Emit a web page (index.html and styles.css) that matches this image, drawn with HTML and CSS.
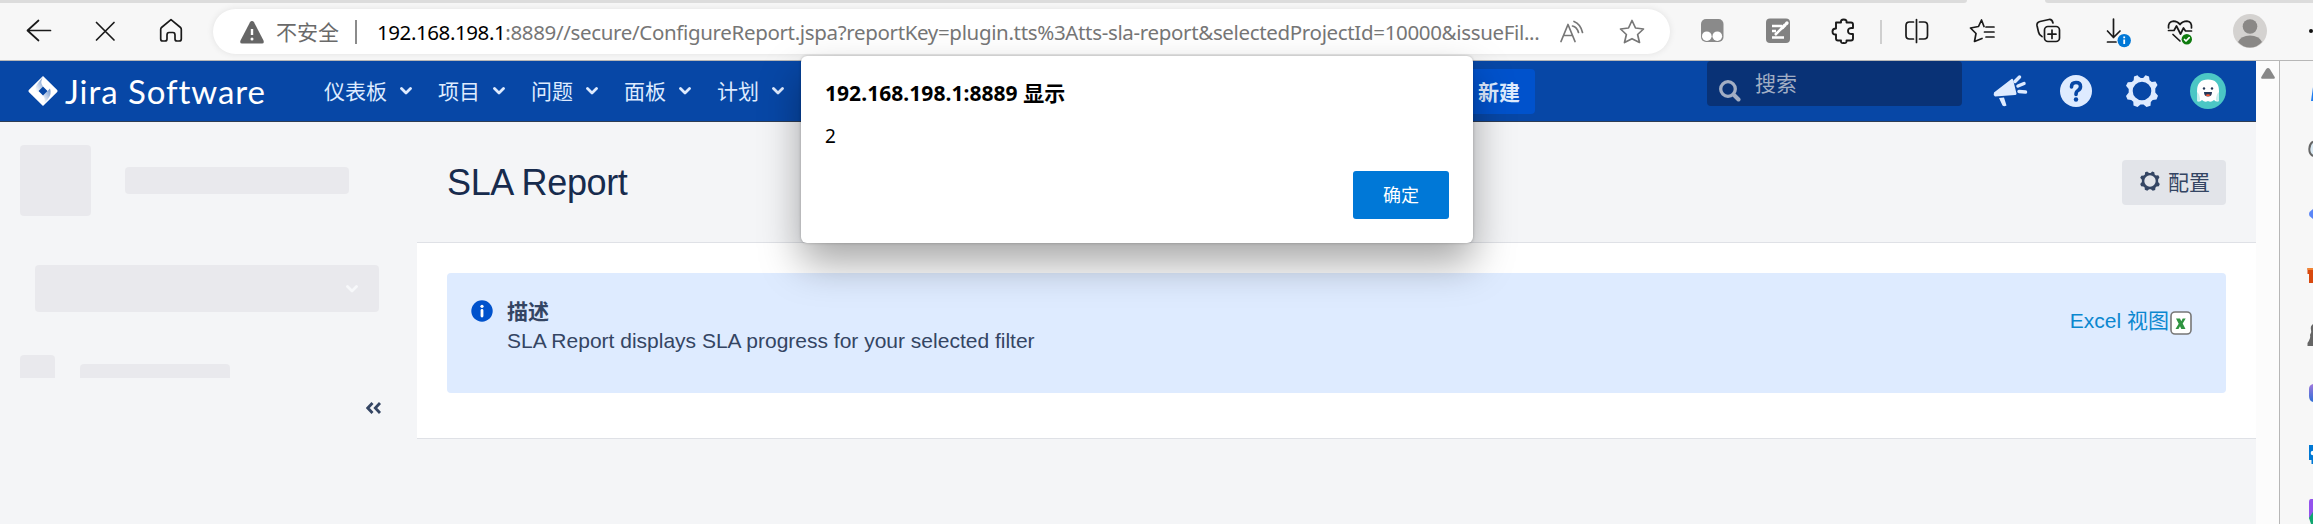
FILE: index.html
```html
<!DOCTYPE html>
<html lang="zh-CN">
<head>
<meta charset="utf-8">
<title>SLA Report</title>
<link rel="stylesheet" href="styles.css">
</head>
<body>
<div class="tabstrip"><span class="tab-left"></span><span class="tab-right"></span></div>
<div class="toolbar">
  <div class="nav-icons">
    <svg class="ic" viewBox="0 0 36 36"><path d="M29.500 17.500H6.500M17.500 7.500L6.500 17.500L17.500 27.500"/></svg>
    <svg class="ic" viewBox="0 0 36 36"><path d="M9.500 9.500L27 27M27 9.500L9.500 27"/></svg>
    <svg class="ic" viewBox="0 0 36 36"><path d="M18 6.700L8.500 14.500Q7.700 15.200 7.700 16.500V26Q7.700 28 9.700 28H12Q14 28 14 26V22Q14 19.500 16 19.500H20Q22 19.500 22 22V26Q22 28 24 28H26.300Q28.300 28 28.300 26V16.500Q28.300 15.200 27.500 14.500Z"/></svg>
  </div>
  <div class="address">
    <svg class="warn" viewBox="0 0 24 24"><path d="M12 1Q13.300 1 14 2.300L23.500 20.500Q24.500 23.500 22 23.500H2Q-.5 23.500 .5 20.500L10 2.300Q10.700 1 12 1Z" fill="#666"/><path d="M12 9V15" stroke="#fff" stroke-width="2.400"/><circle cx="12" cy="19" r="1.500" fill="#fff"/></svg>
    <span class="insecure">不安全</span><span class="bar"></span>
    <span class="url"><span class="host">192.168.198.1</span><span class="path">:8889//secure/ConfigureReport.jspa?reportKey=plugin.tts%3Atts-sla-report&amp;selectedProjectId=10000&amp;issueFil...</span></span>
    <svg class="ic gray read" viewBox="0 0 36 36"><path d="M7 27.500L14 10.500L21 27.500M9.500 21.500H18.500M20 7.500Q26.500 10 28.500 18.500M18.500 12Q23 13 24.500 18.500"/></svg>
    <svg class="ic gray star" viewBox="0 0 36 36"><path d="M18 6.500L21.500 14L29.500 15L23.600 20.500L25.500 28.500L18 24.700L10.500 28.500L12.400 20.500L6.500 15L14.500 14Z"/></svg>
  </div>
  <div class="ext-icons">
    <svg class="ic" viewBox="0 0 36 36"><g stroke="none"><rect x="7" y="6" width="22.500" height="23" rx="5" fill="#8a8a8a"/><circle cx="12.800" cy="23.200" r="4.800" fill="#fff"/><circle cx="23.300" cy="23.200" r="4.800" fill="#fff"/></g></svg>
    <svg class="ic" viewBox="0 0 36 36"><rect x="6" y="5.500" width="24" height="24.500" rx="4" fill="#828282" stroke="none"/><path d="M12 13H22M12 18H16M12 24.500H24M23 14L15 22" stroke="#fff" stroke-width="2.500" stroke-linecap="butt"/><path d="M22.500 14.500L25 12M26.500 10.500L27 10" stroke="#fff" stroke-width="3.300"/></svg>
    <svg class="ic" viewBox="0 0 36 36"><path stroke-width="1.900" d="M10 9.500H15Q14.500 6.500 17.700 6.500Q21 6.500 20.500 9.500H25Q27 9.500 27 11.500V15Q22 14.500 22 18Q22 21.500 27 21V25.500Q27 27.500 25 27.500H20.500Q21 30.500 17.700 30Q14.500 30.500 15 27.500H12Q10 27.500 10 25.500V21.500Q6.500 22 6.500 18.500Q6.500 15.500 10 15.500Z"/></svg>
  </div>
  <span class="divider"></span>
  <div class="tool-icons">
    <svg class="ic" viewBox="0 0 36 36"><path d="M18 6.500V29.500M15 9H11Q7.500 9 7.500 12.500V22.500Q7.500 26 11 26H15M21 9H25.500Q29 9 29 12.500V22.500Q29 26 25.500 26H21" transform="translate(.5 0)"/></svg>
    <svg class="ic" viewBox="0 0 36 36"><path d="M20 13.500L17.500 7L14.500 13.500L6.500 15L12 20.500L10.500 28.500L18 25.500M22 14H30M20.500 19H30M22 24H30"/></svg>
    <svg class="ic" viewBox="0 0 36 36"><rect x="14.500" y="13.500" width="15" height="15" rx="3.500"/><path d="M22 17V25.500M18 21.200H26M12 23.500Q9 22 8.500 19L7 12.500Q6.500 9.500 10 8.500L19 6.500Q22 6 23 10"/></svg>
    <svg class="ic" viewBox="0 0 36 36"><path d="M17.500 6V24.500M11.500 18L17.500 24.500L24 18M11.500 29H20"/><circle cx="28.200" cy="27.600" r="6.700" fill="#0078d7" stroke="none"/><path d="M28.200 26.500V31M28.200 23.500V25.300" stroke="#fff" stroke-width="1.800" stroke-linecap="butt"/></svg>
    <svg class="ic" viewBox="0 0 36 36"><path d="M6.500 15Q6 8.500 11.500 8.200Q15.500 8.200 18 11.500Q20.500 8.200 25 8.200Q30 8.500 29.500 15M6.500 17.500H12L14.500 13L18.500 21L21.500 15L23.500 18H29.500M11 21.500L18 28"/><circle cx="24.800" cy="26.200" r="5.200" fill="#107c10" stroke="none"/><path d="M22.500 26.500L24 28L27.200 24.700" stroke="#fff"/></svg>
  </div>
  <svg class="profile" viewBox="0 0 34 34"><circle cx="17" cy="17" r="17" fill="#d4d2d0"/><circle cx="17" cy="12.500" r="7.300" fill="#8a8886"/><path d="M5 28Q8 21.500 17 21.500Q26 21.500 29 28Q24 33.500 17 33.500Q10 33.500 5 28Z" fill="#8a8886"/></svg>
  <span class="more"></span>
</div>

<div class="window">
  <div class="page">
    <header class="header">
      <svg class="mark" viewBox="0 0 30 30"><defs><linearGradient id="ga" x1="1" y1="0" x2=".3" y2="1"><stop offset="0" stop-color="#0747a6" stop-opacity=".6"/><stop offset="1" stop-color="#0747a6" stop-opacity="0"/></linearGradient></defs><path d="M15 0L29.200 14Q30 15 29.200 16L15 30L.8 16Q0 15 .8 14ZM15 10.500L10.500 15L15 19.500L19.500 15Z" fill="#fff" fill-rule="evenodd"/><path d="M15 1Q11.500 6 15 10.500L8 17.500Q6 12 10 7Z" fill="url(#ga)"/><path d="M15 29Q18.500 24 15 19.500L22 12.500Q24 18 20 23Z" fill="url(#ga)"/></svg>
      <span class="brand">Jira Software</span>
      <nav class="nav">
        <a><span>仪表板</span><svg class="chev" viewBox="0 0 12 8"><path d="M1.500 1.500L6 6L10.500 1.500"/></svg></a>
        <a><span>项目</span><svg class="chev" viewBox="0 0 12 8"><path d="M1.500 1.500L6 6L10.500 1.500"/></svg></a>
        <a><span>问题</span><svg class="chev" viewBox="0 0 12 8"><path d="M1.500 1.500L6 6L10.500 1.500"/></svg></a>
        <a><span>面板</span><svg class="chev" viewBox="0 0 12 8"><path d="M1.500 1.500L6 6L10.500 1.500"/></svg></a>
        <a><span>计划</span><svg class="chev" viewBox="0 0 12 8"><path d="M1.500 1.500L6 6L10.500 1.500"/></svg></a>
      </nav>
      <button class="create">新建</button>
      <div class="search"><svg viewBox="0 0 22 22"><circle cx="9" cy="9" r="7.300" fill="none" stroke="#a2aec4" stroke-width="3.300"/><path d="M15 15L19.500 19.500" stroke="#a2aec4" stroke-width="4" stroke-linecap="round"/></svg><span>搜索</span></div>
      <div class="actions">
        <svg viewBox="0 0 36 36"><path d="M2 19.500L19.500 6Q20.500 5.500 21 6.500L24.500 20.500Q24.500 22 23 22L3 23.500Q1 21.500 2 19.500ZM7 25L12 24.500L14.500 32.500Q12 34 10.500 32.500Z" fill="#deebff"/><path d="M23 8.500L27.500 4M26 13L32 10.500M27 18.500L33.500 19" stroke="#deebff" stroke-width="3.500" stroke-linecap="round"/></svg>
        <svg viewBox="0 0 36 36"><circle cx="18" cy="18" r="16" fill="#deebff"/><path d="M13.500 14Q13.500 9.500 18 9.500Q22.500 9.500 22.500 13.500Q22.500 16 20 17.500Q18 18.500 18 21.500" fill="none" stroke="#0747a6" stroke-width="3.600" stroke-linecap="round"/><circle cx="18" cy="26.500" r="2.200" fill="#0747a6"/></svg>
        <svg viewBox="0 0 36 36"><use href="#gear" fill="#deebff"/></svg>
        <svg viewBox="0 0 36 36"><circle cx="18" cy="18" r="18" fill="#4bc7c5"/><path d="M7 28V18Q7 6.500 18 6.500Q29 6.500 29 18V28Q26.500 29.500 24 27Q21 30 18 28Q15 30 12 27Q9.500 29.500 7 28Z" fill="#fff"/><path d="M7 28V19Q10 21 10 27.500ZM29 28V19Q26 21 26 27.500Z" fill="#c9efee"/><circle cx="14" cy="15.500" r="1.200" fill="#253858"/><circle cx="22" cy="15.500" r="1.200" fill="#253858"/><path d="M14 19H22Q22 23.500 18 23.500Q14 23.500 14 19Z" fill="#253858"/><path d="M15.500 22Q18 20.500 20.500 22Q18 24.500 15.500 22Z" fill="#ff5630"/></svg>
      </div>
    </header>
    <div class="body">
      <aside class="side">
        <div class="row"><i class="sk sk-avatar"></i><i class="sk sk-title"></i></div>
        <div class="sk sk-select"><svg class="chev" viewBox="0 0 12 8"><path d="M1.500 1.500L6 6L10.500 1.500"/></svg></div>
        <div class="row clipped"><i class="sk sk-small"></i><i class="sk sk-line"></i></div>
        <svg class="collapse" viewBox="0 0 16 12"><path d="M6.500 1L1.800 6L6.500 11M14 1L9.300 6L14 11" fill="none" stroke="#344563" stroke-width="2.800"/></svg>
      </aside>
      <main class="main">
        <div class="title-row">
          <h1>SLA Report</h1>
          <button class="config"><svg viewBox="0 0 36 36"><defs><path id="gear" fill-rule="evenodd" d="M14.500 3.500L16.800 5H19.200L21.500 2.300L25 3.500L25.600 7.300L27.800 9L31.500 8.600L33.500 12L31.300 15.500V19.500L34 22.800L32.500 26.500L28.700 27L26.800 29L26.500 32.700L22.500 34L19.500 31.500H16.500L13.500 34L9.500 32.500L9.300 28.700L7.200 27L3.500 26.500L2 23L4.700 19.500V16L2 12.800L3.800 9.300L7.800 9L9.700 7.200L10 3.500L13.500 2.300ZM18 8.700A9.300 9.300 0 1 0 18 27.300A9.300 9.300 0 1 0 18 8.700Z"/></defs><use href="#gear" fill="#344563"/></svg><span>配置</span></button>
        </div>
        <section class="panel">
          <div class="info">
            <svg class="info-icon" viewBox="0 0 22 22"><circle cx="11" cy="11" r="10.700" fill="#0052cc"/><circle cx="11" cy="6.300" r="1.600" fill="#fff"/><path d="M11 10.500V16" stroke="#fff" stroke-width="2.800" stroke-linecap="round"/></svg>
            <div class="info-text"><strong>描述</strong><p>SLA Report displays SLA progress for your selected filter</p></div>
            <a class="excel">Excel 视图<svg viewBox="0 0 22 24"><rect x="1" y="1" width="20" height="22" rx="4" fill="#fff" stroke="#777" stroke-width="1.600"/><path d="M6 7.500H10L11.300 10.300L12.700 7.500H15.700L12.700 12.500L15.500 18H11.300L10 15.200L8.500 18H5.500L8.700 12.700Z" fill="#2e9440"/></svg></a>
          </div>
        </section>
      </main>
    </div>
  </div>
  <div class="scrollbar"><svg viewBox="0 0 14 11"><path d="M7 0Q8 0 8.800 1L13.700 9Q14.300 10.700 12.800 10.700H1.200Q-.3 10.700 .3 9L5.200 1Q6 0 7 0Z" fill="#888"/></svg></div>
  <div class="edge">
    <svg viewBox="0 0 33 463"><defs><linearGradient id="gb" x2="0" y2="1"><stop stop-color="#a078dc"/><stop offset="1" stop-color="#2f6fd6"/></linearGradient></defs>
      <path d="M33 26L31 40H33Z" fill="#1f7df0"/>
      <path d="M33 80.500Q29.300 83 29.300 88Q29.300 93 33 95" fill="#d9e9f3" stroke="#666" stroke-width="2"/>
      <path d="M33 148L29.500 151Q28.500 153 29.500 155L33 158Z" fill="#5b86f7"/>
      <path d="M27.500 207H33V222H29V213H27.500Z" fill="#d8490f"/><path d="M27.500 207H33V209H27.500Z" fill="#f28434"/>
      <path d="M33 263Q30 265 31 269Q32 271 30 274Q31 277 27.500 282V285H33Z" fill="#666"/>
      <path d="M33 323Q29 324 29 328V335Q29 340 33 341Z" fill="url(#gb)"/>
      <path d="M29 384H33V403H31.500V399H29Z" fill="#0078d4"/><circle cx="33" cy="392" r="2.300" fill="#fff"/>
      <path d="M33 438H31Q29 438 29 441V458L33 452Z" fill="#9452ed"/><path d="M33 451L29 457L31 463H33Z" fill="#10a66f"/>
    </svg>
  </div>
</div>

<div class="dialog" role="alertdialog">
  <div class="dialog-title"><span class="dialog-host">192.168.198.1:8889</span> 显示</div>
  <div class="dialog-msg">2</div>
  <button class="ok">确定</button>
</div>
</body>
</html>
```
FILE: styles.css
```css
* { box-sizing: border-box; }
body {
  margin: 0; width: 2313px; height: 524px; overflow: hidden; position: relative;
  display: flex; flex-direction: column; background: #f7f7f7;
  font-family: "Liberation Sans", "Noto Sans CJK SC", sans-serif; font-size: 21px; color: #172b4d;
}
button { border: 0; font: inherit; }
svg { display: block; flex: none; }

/* browser chrome */
.tabstrip { height: 3px; flex: none; display: flex; justify-content: space-between; }
.tab-left, .tab-right { background: #dcdcdc; }
.tab-left { width: 1967px; border-bottom-right-radius: 3px; }
.tab-right { width: 268px; border-bottom-left-radius: 3px; }
.toolbar { height: 58px; flex: none; display: flex; align-items: flex-start; padding: 6px 0 0 21px; border-bottom: 1px solid #b7b7b7; overflow: hidden; }
.ic { width: 36px; height: 36px; fill: none; stroke: #1a1a1a; stroke-width: 1.7; stroke-linecap: round; stroke-linejoin: round; }
.gray { stroke: #777; }
.nav-icons, .ext-icons, .tool-icons { display: flex; gap: 30px; padding-top: 4px; flex: none; }
.address { width: 1457px; height: 45px; flex: none; margin: 0 24px; padding-left: 27px; display: flex; align-items: center; background: #fff; border-radius: 23px; box-shadow: 0 0 7px rgba(0,0,0,.09); white-space: nowrap; }
.warn { width: 24px; height: 24px; }
.insecure { width: 63px; margin-left: 12px; padding-bottom: 2px; color: #6a6a6a; font: 21px/30px "Noto Sans CJK SC", sans-serif; }
.bar { width: 2px; height: 24px; margin-left: 16px; background: #8b8b8b; }
.url { width: 1165px; flex: none; margin-left: 20px; font-family: "Noto Sans", sans-serif; font-size: 20.5px; line-height: 30px; color: #767676; }
.host { color: #000; letter-spacing: -.42px; }
.path { letter-spacing: -.34px; }
.read { margin-left: 12px; }
.star { margin-left: 24px; }
.divider { width: 2px; height: 24px; flex: none; margin: 11px 16px 0 18px; background: #cfcfcf; }
.profile { width: 34px; height: 34px; margin: 5px 0 0 35px; }
.more { width: 4px; height: 4px; flex: none; margin: 20px 0 0 42px; border-radius: 50%; background: #111; }

.window { flex: 1; display: flex; min-height: 0; }
.page { width: 2256px; display: flex; flex-direction: column; background: #f4f5f7; }
.scrollbar { width: 24px; padding: 7px 0 0 5px; background: #fcfcfc; border-right: 1px solid #b7b7b7; }
.scrollbar svg { width: 14px; height: 11px; }
.edge { width: 33px; background: #f7f7f7; overflow: hidden; }
.edge svg { width: 33px; height: 463px; }

/* application header */
.header { height: 61px; flex: none; display: flex; align-items: center; padding-left: 28px; background: #0747a6; border-bottom: 1px solid #2e3d54; color: #deebff; }
.mark { width: 30px; height: 30px; }
.brand { width: 259px; flex: none; margin-left: 7px; padding-bottom: 1px; color: #fff; font: 33px/40px Lato, sans-serif; letter-spacing: .95px; white-space: nowrap; }
.nav { width: 1110px; display: flex; gap: 26px; font: 21px/30px "Noto Sans CJK SC", sans-serif; }
.nav a { display: flex; align-items: center; gap: 13px; }
.nav span { padding-bottom: 2px; }
.chev { width: 12px; height: 8px; fill: none; stroke: #deebff; stroke-width: 2.8; stroke-linecap: round; stroke-linejoin: round; }
.create { width: 101px; height: 45px; flex: none; padding: 0 15px; text-align: right; border-radius: 4px; background: #0052cc; color: #deebff; font: bold 21px/43px "Noto Sans CJK SC", sans-serif; }
.search { width: 255px; height: 45px; flex: none; align-self: flex-start; margin-left: 172px; padding-left: 12px; display: flex; gap: 14px; border-radius: 4px; background: #093276; color: #a2aec4; font: 21px/43px "Noto Sans CJK SC", sans-serif; }
.search svg { width: 22px; height: 22px; margin-top: 19px; }
.actions { display: flex; gap: 30px; margin-left: 30px; }
.actions svg { width: 36px; height: 36px; }

/* page body */
.body { flex: 1; display: flex; min-height: 0; }
.side { width: 417px; padding: 23px 0 0 20px; display: flex; flex-direction: column; }
.row { display: flex; }
.sk { display: block; background: #e9e9ed; border-radius: 4px; }
.sk-avatar { width: 71px; height: 71px; }
.sk-title { width: 224px; height: 27px; margin: 22px 0 0 34px; }
.sk-select { width: 344px; height: 47px; flex: none; margin: 49px 0 0 15px; padding: 20px 0 0 311px; }
.sk-select .chev { stroke: #f7f8fa; }
.clipped { height: 23px; margin-top: 43px; overflow: hidden; flex: none; }
.sk-small { width: 35px; height: 36px; }
.sk-line { width: 150px; height: 27px; margin: 9px 0 0 25px; }
.collapse { width: 16px; height: 12px; margin: 24px 0 0 346px; }
.main { width: 1839px; }
.title-row { height: 120px; display: flex; justify-content: space-between; align-items: flex-start; padding: 38px 30px 0; }
h1 { margin: 1px 0 0; font-size: 36px; font-weight: 400; line-height: 44px; letter-spacing: -.36px; }
.config { width: 104px; height: 45px; display: flex; align-items: center; gap: 7px; padding: 0 0 0 17px; border-radius: 4px; background: #e2e4e9; color: #344563; font: 21px/41px "Noto Sans CJK SC", sans-serif; }
.config span { padding-bottom: 3px; }
.config svg { width: 22px; height: 22px; margin-top: -3px; }
.panel { height: 197px; padding: 30px; background: #fff; border: solid #dfe1e6; border-width: 1px 0; }
.info { height: 120px; display: flex; align-items: flex-start; padding: 23px 34px 0 24px; border-radius: 4px; background: #deebff; color: #344563; line-height: 30px; }
.info-icon { width: 22px; height: 22px; margin-top: 4px; }
.info-text { flex: 1; margin-left: 14px; }
.info-text strong { display: block; margin: -1px 0 1px; font: bold 21px/30px "Noto Sans CJK SC", sans-serif; }
.info-text p { margin: 0; }
.excel { display: flex; align-items: flex-start; margin-top: 10px; color: #0b87cf; }
.excel svg { width: 22px; height: 24px; margin: 5px 0 0 1px; }

/* script alert */
.dialog { position: absolute; left: 801px; top: 56px; width: 672px; height: 187px; display: flex; flex-direction: column; padding: 22px 24px 24px; border-radius: 6px; background: #fff; color: #000; box-shadow: 0 0 3px rgba(0,0,0,.25), 0 20px 40px rgba(0,0,0,.35); font-family: "Noto Sans", "Noto Sans CJK SC", sans-serif; }
.dialog-title { font-size: 21px; line-height: 30px; font-weight: 700; }
.dialog-host { font-size: 21px; letter-spacing: .05px; }
.dialog-msg { margin-top: 14px; font-size: 19px; line-height: 28px; }
.ok { width: 96px; height: 48px; margin-top: auto; align-self: flex-end; padding: 0 0 3px; border-radius: 3px; background: #0078d7; color: #fff; font: 18px/44px "Noto Sans CJK SC", sans-serif; }
```
